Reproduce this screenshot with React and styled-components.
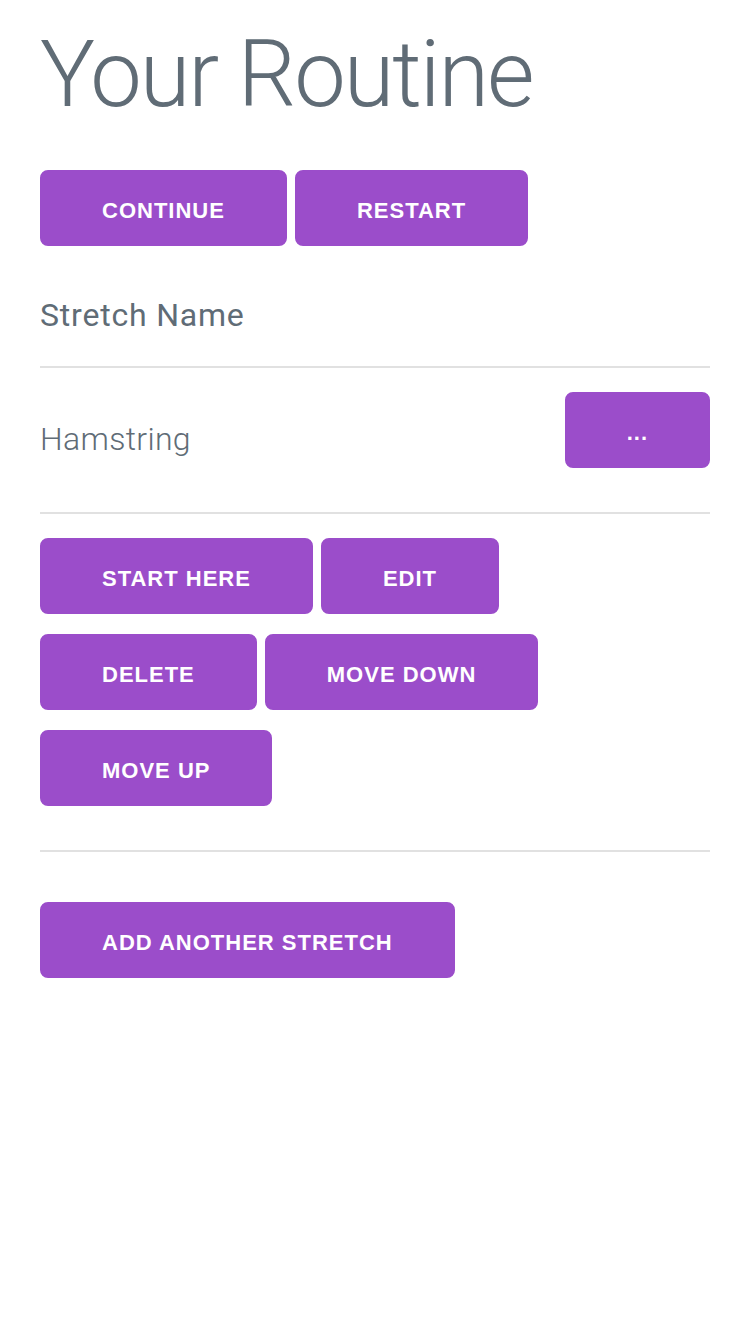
import React from "react";
import styled, { createGlobalStyle } from "styled-components";

const Global = createGlobalStyle`
  *, *::before, *::after { box-sizing: border-box; }
  html, body { margin: 0; padding: 0; background: #ffffff; }
  body {
    font-family: Roboto, "Liberation Sans", sans-serif;
    font-weight: 300;
    color: #606c76;
    letter-spacing: 0.01em;
    line-height: 1.6;
    font-size: 32px;
  }
`;

const Page = styled.main`
  padding: 20px 40px 0;
`;

const Title = styled.h1`
  margin: 0 0 40px;
  font-size: 92px;
  font-weight: 300;
  line-height: 1.2;
  letter-spacing: -2px;
`;

const Button = styled.button`
  display: inline-block;
  height: 76px;
  line-height: 76px;
  padding: 1px 60px 0;
  margin: 0 0 20px;
  border: 2px solid #9b4dca;
  border-radius: 8px;
  background: #9b4dca;
  color: #ffffff;
  font-family: "Liberation Sans", Arial, sans-serif;
  font-size: 22px;
  font-weight: 700;
  letter-spacing: 1px;
  text-transform: uppercase;
  white-space: nowrap;
  cursor: pointer;
`;

const ButtonRow = styled.div`
  display: flex;
  flex-wrap: wrap;
  column-gap: 8px;
  align-items: flex-start;
`;

const Table = styled.table`
  width: 100%;
  border-collapse: collapse;
  border-spacing: 0;
  margin-bottom: 50px;
`;

const Cell = styled.td`
  padding: 24px 30px;
  border-bottom: 2px solid #e1e1e1;
  text-align: ${(p) => (p.$right ? "right" : "left")};
  vertical-align: middle;
  font-weight: 300;
  &:first-child { padding-left: 0; }
  &:last-child { padding-right: 0; }
`;

const Head = styled(Cell).attrs({ as: "th" })`
  font-weight: 400;
  letter-spacing: 0.8px;
`;

export default function App() {
  return (
    <>
      <Global />
      <Page>
        <Title>Your Routine</Title>
        <ButtonRow>
          <Button>Continue</Button>
          <Button>Restart</Button>
        </ButtonRow>
        <Table>
          <thead>
            <tr>
              <Head>Stretch Name</Head>
              <Head />
            </tr>
          </thead>
          <tbody>
            <tr>
              <Cell>Hamstring</Cell>
              <Cell $right>
                <Button>...</Button>
              </Cell>
            </tr>
            <tr>
              <Cell colSpan={2}>
                <ButtonRow>
                  <Button>Start here</Button>
                  <Button>Edit</Button>
                  <Button>Delete</Button>
                  <Button>Move down</Button>
                  <Button>Move up</Button>
                </ButtonRow>
              </Cell>
            </tr>
          </tbody>
        </Table>
        <Button>Add another stretch</Button>
      </Page>
    </>
  );
}
